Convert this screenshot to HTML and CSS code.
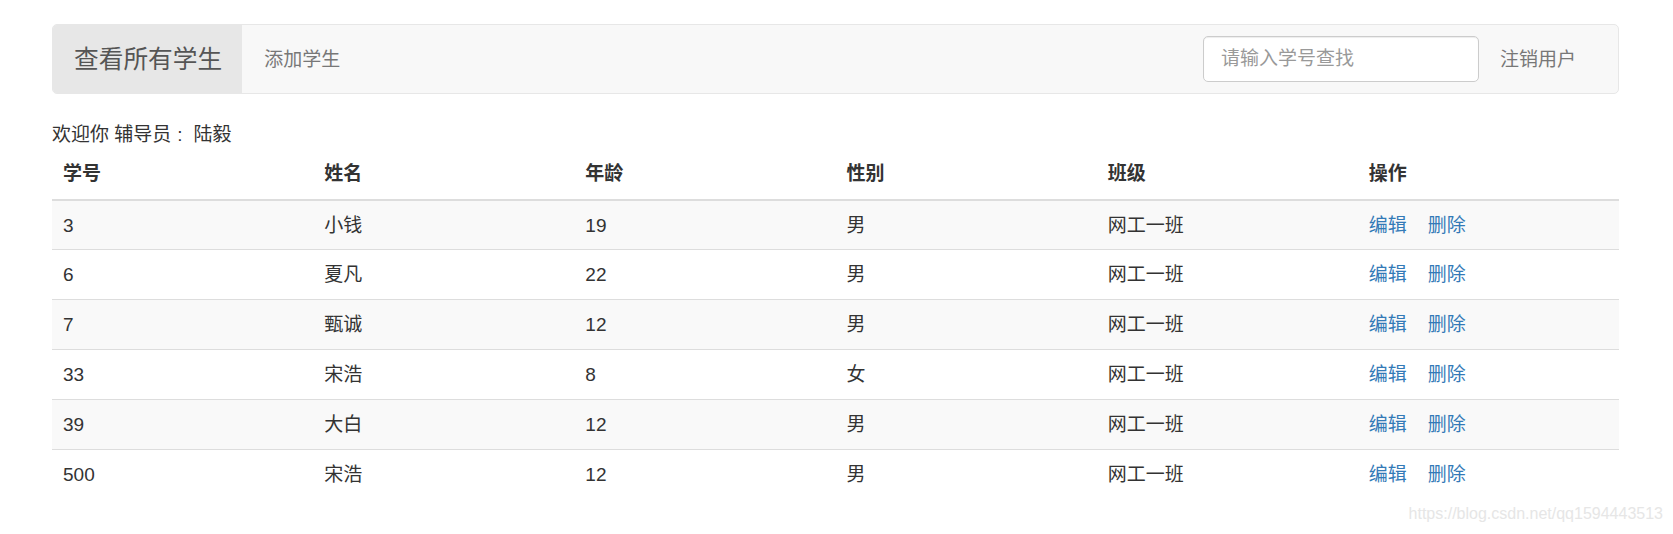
FILE: index.html
```html
<!DOCTYPE html>
<html lang="zh-CN">
<head>
<meta charset="utf-8">
<title>查看所有学生</title>
<link rel="stylesheet" href="styles.css">
</head>
<body>
<div class="page">
  <nav class="navbar">
    <a class="brand" href="#">查看所有学生</a>
    <a class="nav-link" href="#">添加学生</a>
    <form class="search">
      <input class="search-input" type="text" placeholder="请输入学号查找">
    </form>
    <a class="nav-link logout" href="#">注销用户</a>
  </nav>

  <div class="welcome">欢迎你 辅导员<span class="colon">:</span>陆毅</div>

  <table class="table">
    <thead>
      <tr><th>学号</th><th>姓名</th><th>年龄</th><th>性别</th><th>班级</th><th>操作</th></tr>
    </thead>
    <tbody>
      <tr><td>3</td><td>小钱</td><td>19</td><td>男</td><td>网工一班</td><td><a href="#">编辑</a><a class="del" href="#">删除</a></td></tr>
      <tr><td>6</td><td>夏凡</td><td>22</td><td>男</td><td>网工一班</td><td><a href="#">编辑</a><a class="del" href="#">删除</a></td></tr>
      <tr><td>7</td><td>甄诚</td><td>12</td><td>男</td><td>网工一班</td><td><a href="#">编辑</a><a class="del" href="#">删除</a></td></tr>
      <tr><td>33</td><td>宋浩</td><td>8</td><td>女</td><td>网工一班</td><td><a href="#">编辑</a><a class="del" href="#">删除</a></td></tr>
      <tr><td>39</td><td>大白</td><td>12</td><td>男</td><td>网工一班</td><td><a href="#">编辑</a><a class="del" href="#">删除</a></td></tr>
      <tr><td>500</td><td>宋浩</td><td>12</td><td>男</td><td>网工一班</td><td><a href="#">编辑</a><a class="del" href="#">删除</a></td></tr>
    </tbody>
  </table>
</div>
<div class="watermark">https://blog.csdn.net/qq1594443513</div>
</body>
</html>
```

FILE: styles.css
```css
html, body {
  margin: 0;
  padding: 0;
  background: #fff;
}

body {
  font-family: "Liberation Sans", "Noto Sans CJK SC", sans-serif;
  font-size: 19px;
  line-height: 27px;
  color: #333;
}

.page {
  padding: 24px 54px 0 52px;
}

a {
  text-decoration: none;
}

.navbar {
  display: flex;
  align-items: stretch;
  height: 68px;
  background: #f8f8f8;
  border: 1px solid #e7e7e7;
  border-radius: 5px;
  overflow: hidden;
  margin-bottom: 27px;
}

.brand {
  display: flex;
  align-items: center;
  padding: 0 20px 0 21px;
  background: #e7e7e7;
  color: #555;
  font-size: 24.7px;
  line-height: 27px;
}

.nav-link {
  display: flex;
  align-items: center;
  padding: 0 20px 0 22px;
  color: #777;
  font-size: 19px;
}

.search {
  margin: 0 0 0 auto;
  display: flex;
  align-items: center;
}

.search-input {
  box-sizing: border-box;
  width: 276px;
  height: 46px;
  padding: 0 17px;
  border: 1px solid #ccc;
  border-radius: 5px;
  background: #fff;
  box-shadow: inset 0 1px 1px rgba(0, 0, 0, 0.075);
  font-family: "Liberation Sans", "Noto Sans CJK SC", sans-serif;
  font-size: 19px;
  color: #555;
  outline: none;
}

.search-input::placeholder {
  color: #999;
}

.logout {
  padding: 0 42px 0 21px;
}

.welcome {
  height: 27px;
  line-height: 27px;
}

.colon {
  padding: 0 11px 0 6px;
}

.table {
  width: 100%;
  border-collapse: collapse;
  border-spacing: 0;
  table-layout: fixed;
}

.table th {
  text-align: left;
  font-weight: bold;
  padding: 12px 11px;
  line-height: 27px;
  border-bottom: 2px solid #ddd;
}

.table td {
  padding: 11px;
  line-height: 27px;
  border-top: 1px solid #ddd;
}

.table tbody tr:first-child td {
  border-top: 0;
  padding-bottom: 10px;
}

.table tbody tr:nth-child(odd) {
  background: #f9f9f9;
}

.table td a {
  color: #337ab7;
}

.table td a.del {
  margin-left: 21px;
}

.watermark {
  position: absolute;
  top: 506px;
  right: 10px;
  font-family: "Liberation Sans", Arial, sans-serif;
  font-size: 16px;
  line-height: 16px;
  color: #e6e6e6;
}
```
